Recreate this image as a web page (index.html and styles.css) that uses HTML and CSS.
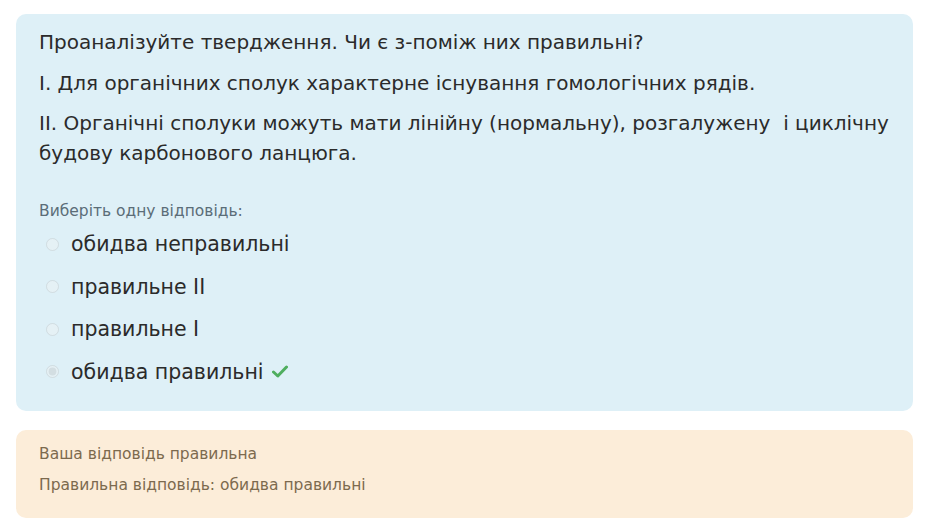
FILE: index.html
```html
<!DOCTYPE html>
<html lang="uk">
<head>
    <meta charset="UTF-8">
    <title>Питання</title>
    <link rel="stylesheet" href="styles.css">
</head>
<body>
    <div class="question-card">
        <div class="qtext">
            <p>Проаналізуйте твердження. Чи є з-поміж них правильні?</p>
            <p>I. Для органічних сполук характерне існування гомологічних рядів.</p>
            <p>II. Органічні сполуки можуть мати лінійну (нормальну), розгалужену&nbsp; і циклічну будову карбонового ланцюга.</p>
        </div>
        <div class="prompt">Виберіть одну відповідь:</div>
        <div class="answers">
            <label><input type="radio" name="q1" disabled> обидва неправильні</label>
            <label><input type="radio" name="q1" disabled> правильне II</label>
            <label><input type="radio" name="q1" disabled> правильне I</label>
            <label><input type="radio" name="q1" checked disabled> обидва правильні
                <svg class="tick" width="16" height="13" viewBox="0 0 16 13"><path d="M1.5 7 L5.8 11 L14.5 2" fill="none" stroke="#4fae5f" stroke-width="3" stroke-linecap="round" stroke-linejoin="round"/></svg>
            </label>
        </div>
    </div>

    <div class="feedback">
        <p>Ваша відповідь правильна</p>
        <p>Правильна відповідь: обидва правильні</p>
    </div>
</body>
</html>
```

FILE: styles.css
```css
body { font-family: "DejaVu Sans", sans-serif; background: #fff; margin: 0; padding: 14px 12px 10px 16px; color: #2b2b2b; }
.question-card { background: #def0f7; border-radius: 10px; padding: 13px 23px 24px 23px; }
.qtext p { margin: 0 0 10.5px 0; font-size: 20px; line-height: 30px; }
.qtext p:last-child { margin-bottom: 0; }
.prompt { margin-top: 33px; font-size: 15.5px; color: #5b6d78; line-height: 20px; }
.answers label { display: flex; align-items: center; font-size: 20.5px; line-height: 30px; margin-top: 12.5px; }
.answers label:first-child { margin-top: 8px; }
.answers input { width: 13px; height: 13px; margin: 0 12px 0 7px; opacity: 0.5; }
.tick { margin-left: 8px; }
.feedback { background: #fcedd9; border-radius: 10px; margin-top: 19px; padding: 14px 23px 23px 23px; color: #7c6a4e; }
.feedback p { margin: 0 0 11px 0; font-size: 15.5px; line-height: 20px; }
.feedback p:last-child { margin-bottom: 0; }
```
